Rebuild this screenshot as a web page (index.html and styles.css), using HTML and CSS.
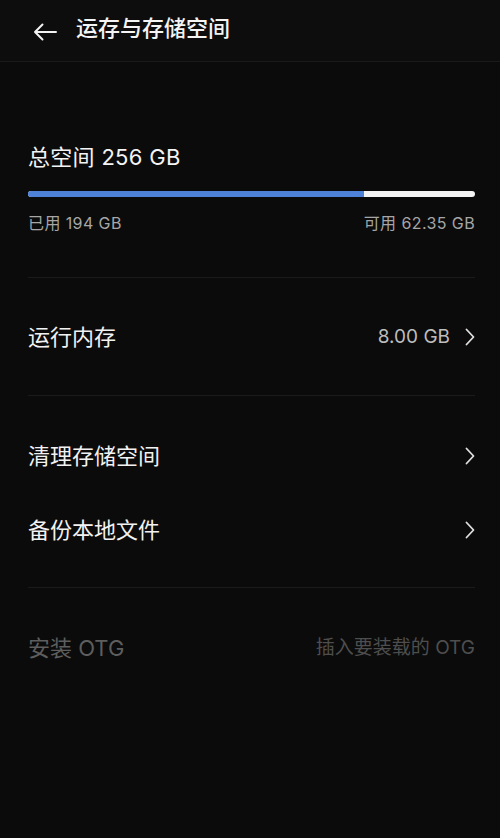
FILE: index.html
```html
<!DOCTYPE html>
<html lang="zh-CN">
<head>
<meta charset="utf-8">
<title>运存与存储空间</title>
<link rel="stylesheet" href="styles.css">
</head>
<body>
<header class="topbar">
  <svg class="back" width="24" height="18" viewBox="0 0 24 18" aria-hidden="true">
    <path d="M23 9H2M9.5 1.5L2 9l7.5 7.5" fill="none" stroke="#f2f2f2" stroke-width="2" stroke-linecap="round" stroke-linejoin="round"/>
  </svg>
  <h1 class="title">运存与存储空间</h1>
</header>
<main class="content">
  <section class="storage">
    <div class="total">总空间 256 GB</div>
    <div class="bar"><div class="bar-used" style="width:75.2%"></div></div>
    <div class="usage">
      <span>已用 194 GB</span>
      <span>可用 62.35 GB</span>
    </div>
  </section>
  <div class="divider"></div>
  <div class="row row-ram">
    <span class="label">运行内存</span>
    <span class="right"><span class="value">8.00 GB</span>
      <svg class="chev" width="10" height="18" viewBox="0 0 10 18" aria-hidden="true"><path d="M1.5 1.5L8.5 9l-7 7.5" fill="none" stroke="#e0e0e0" stroke-width="1.8" stroke-linecap="round" stroke-linejoin="round"/></svg>
    </span>
  </div>
  <div class="divider"></div>
  <div class="group">
    <div class="row row-item">
      <span class="label">清理存储空间</span>
      <svg class="chev" width="10" height="18" viewBox="0 0 10 18" aria-hidden="true"><path d="M1.5 1.5L8.5 9l-7 7.5" fill="none" stroke="#e0e0e0" stroke-width="1.8" stroke-linecap="round" stroke-linejoin="round"/></svg>
    </div>
    <div class="row row-item">
      <span class="label">备份本地文件</span>
      <svg class="chev" width="10" height="18" viewBox="0 0 10 18" aria-hidden="true"><path d="M1.5 1.5L8.5 9l-7 7.5" fill="none" stroke="#e0e0e0" stroke-width="1.8" stroke-linecap="round" stroke-linejoin="round"/></svg>
    </div>
  </div>
  <div class="divider"></div>
  <div class="row row-otg">
    <span class="label dim">安装 OTG</span>
    <span class="hint">插入要装载的 OTG</span>
  </div>
</main>
</body>
</html>
```
FILE: styles.css
```css
html, body {
  margin: 0;
  padding: 0;
  background: #0b0b0b;
  color: #f2f2f2;
  font-family: "Inter", "Noto Sans CJK SC", sans-serif;
}
body {
  min-height: 838px;
}
.topbar {
  height: 61px;
  display: flex;
  align-items: center;
  gap: 19px;
  padding-left: 33px;
  border-bottom: 1px solid #1a1a1a;
  background: #0d0d0d;
}
.back {
  display: block;
  margin-top: 2px;
}
.title {
  margin: 0 0 6px;
  font-size: 22px;
  font-weight: 500;
  line-height: 30px;
  color: #f4f4f4;
}
.content {
  padding: 0 25px 0 28px;
}
.storage {
  padding-top: 80px;
  padding-bottom: 44px;
}
.total {
  font-size: 22px;
  line-height: 30px;
  color: #f4f4f4;
  letter-spacing: 0.3px;
}
.bar {
  margin-top: 19px;
  height: 6px;
  border-radius: 3px;
  background: #f4f4f4;
  overflow: hidden;
}
.bar-used {
  height: 100%;
  background: #4d82d8;
}
.usage {
  margin-top: 16px;
  display: flex;
  justify-content: space-between;
  font-size: 16px;
  line-height: 20px;
  color: #a6a6a6;
  letter-spacing: 0.4px;
}
.divider {
  height: 1px;
  background: #1b1b1b;
}
.row {
  display: flex;
  align-items: center;
  justify-content: space-between;
}
.label {
  font-size: 22px;
  line-height: 30px;
  color: #f2f2f2;
}
.row-ram {
  height: 117px;
}
.right {
  display: flex;
  align-items: center;
  gap: 15px;
}
.value {
  font-size: 19px;
  line-height: 24px;
  color: #bdbdbd;
}
.chev {
  display: block;
}
.group {
  padding: 23px 0 20px;
}
.row-item {
  height: 74px;
}
.row-otg {
  height: 120px;
}
.label.dim {
  color: #5e5e5e;
}
.hint {
  font-size: 19px;
  line-height: 24px;
  color: #4e4e4e;
}
```
